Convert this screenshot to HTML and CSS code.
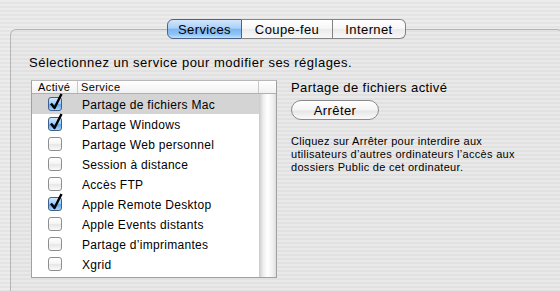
FILE: index.html
```html
<!DOCTYPE html>
<html lang="fr">
<head>
    <meta charset="UTF-8">
    <title>Partage</title>
    <link rel="stylesheet" href="styles.css">
</head>
<body>
    <div class="prefs">
        <!-- Onglets -->
        <nav class="tabs">
            <button class="tab active">Services</button>
            <button class="tab">Coupe-feu</button>
            <button class="tab">Internet</button>
        </nav>

        <section class="panel">
            <p class="intro">Sélectionnez un service pour modifier ses réglages.</p>

            <div class="panel-body">
                <!-- Liste des services -->
                <div class="services-table">
                    <div class="table-head">
                        <span class="col-on">Activé</span>
                        <span class="col-name">Service</span>
                        <span class="col-scroll"></span>
                    </div>
                    <div class="table-body">
                        <ul class="rows">
                            <li class="row selected"><span class="box on"><svg viewBox="0 0 16 18"><path d="M3 10.5 L6.5 15 L13.5 1"/></svg></span><span class="name">Partage de fichiers Mac</span></li>
                            <li class="row"><span class="box on"><svg viewBox="0 0 16 18"><path d="M3 10.5 L6.5 15 L13.5 1"/></svg></span><span class="name">Partage Windows</span></li>
                            <li class="row"><span class="box"></span><span class="name">Partage Web personnel</span></li>
                            <li class="row"><span class="box"></span><span class="name">Session à distance</span></li>
                            <li class="row"><span class="box"></span><span class="name">Accès FTP</span></li>
                            <li class="row"><span class="box on"><svg viewBox="0 0 16 18"><path d="M3 10.5 L6.5 15 L13.5 1"/></svg></span><span class="name">Apple Remote Desktop</span></li>
                            <li class="row"><span class="box"></span><span class="name">Apple Events distants</span></li>
                            <li class="row"><span class="box"></span><span class="name">Partage d’imprimantes</span></li>
                            <li class="row"><span class="box"></span><span class="name">Xgrid</span></li>
                        </ul>
                        <div class="scroll-track"></div>
                    </div>
                </div>

                <!-- Détails du service -->
                <div class="details">
                    <h2 class="status">Partage de fichiers activé</h2>
                    <button class="pill-button">Arrêter</button>
                    <p class="hint">Cliquez sur Arrêter pour interdire aux utilisateurs d’autres ordinateurs l’accès aux dossiers Public de cet ordinateur.</p>
                </div>
            </div>
        </section>
    </div>
</body>
</html>
```

FILE: styles.css
```css
* {
    margin: 0;
    padding: 0;
    box-sizing: border-box;
}

body {
    font-family: "Liberation Sans", Arial, sans-serif;
    color: #000;
    background: repeating-linear-gradient(to bottom, #ececec 0, #ececec 2px, #e4e4e4 2px, #e4e4e4 4px);
    height: 291px;
    overflow: hidden;
    padding-top: 19px;
}

.prefs {
    width: 553px;
    margin-left: 10px;
}

/* Onglets */
.tabs {
    display: flex;
    justify-content: center;
    position: relative;
    z-index: 1;
}

.tab {
    font-family: inherit;
    font-size: 13px;
    letter-spacing: 0.4px;
    height: 20px;
    padding: 0;
    border: 1px solid #838383;
    border-left: none;
    background: linear-gradient(to bottom, #ffffff 0%, #f6f6f6 50%, #ebebeb 52%, #f7f7f7 100%);
    color: #000;
}

.tab:nth-child(1) {
    width: 75px;
    border-left: 1px solid #5c6c86;
    border-radius: 6px 0 0 6px;
}

.tab:nth-child(2) {
    width: 91px;
}

.tab:nth-child(3) {
    width: 73px;
    border-radius: 0 6px 6px 0;
}

.tab.active {
    border-color: #4d6385;
    background: linear-gradient(to bottom, #d3e7fc 0%, #a9d0f7 45%, #7cb6f2 52%, #8fc4f6 80%, #c3e2fd 100%);
}

.panel {
    margin-top: -10px;
    height: 262px;
    border: 1px solid #b4b4b4;
    border-bottom: none;
    border-radius: 6px 6px 0 0;
    padding: 25px 0 0 18px;
    background: rgba(0, 0, 0, 0.01);
}

.intro {
    font-size: 13px;
    line-height: 16px;
    letter-spacing: 0.5px;
}

.panel-body {
    display: flex;
    margin-top: 9px;
    padding-left: 2px;
}

/* Tableau */
.services-table {
    width: 246px;
    border: 1px solid #a0a0a0;
    border-top-color: #b8b8b8;
    background: #fff;
}

.table-head {
    display: flex;
    height: 13px;
    border-bottom: 1px solid #b0b0b0;
    background: linear-gradient(to bottom, #ffffff, #f1f1f1);
    font-size: 11px;
    line-height: 12px;
    letter-spacing: 0.4px;
}

.table-head span {
    border-right: 1px solid #c8c8c8;
}

.col-on {
    width: 46px;
    padding-left: 6px;
}

.col-name {
    width: 181px;
    padding-left: 3px;
}

.col-scroll {
    width: 17px;
    border-right: none !important;
}

.table-body {
    display: flex;
    height: 183px;
}

.rows {
    list-style: none;
    width: 227px;
}

.row {
    display: flex;
    align-items: center;
    height: 20px;
    font-size: 12px;
    letter-spacing: 0.3px;
}

.row.selected {
    background: #d4d4d4;
}

.box {
    position: relative;
    width: 14px;
    height: 14px;
    margin: 0 20px 0 16px;
    border: 1px solid #8e8e8e;
    border-radius: 3px;
    background: linear-gradient(to bottom, #ffffff 0%, #f4f4f4 50%, #e6e6e6 55%, #fbfbfb 100%);
}

.box.on {
    border-color: #3f5f8f;
    background: linear-gradient(to bottom, #d5e9fd 0%, #9cc9f6 48%, #63a6ee 55%, #a9d6fb 100%);
}

.box svg {
    position: absolute;
    left: -1px;
    top: -5px;
    width: 16px;
    height: 18px;
    fill: none;
    stroke: #000;
    stroke-width: 2.4;
    stroke-linejoin: round;
}

.name {
    padding-top: 1px;
}

.scroll-track {
    width: 17px;
    background: linear-gradient(to right, #c9c9c9 0%, #eeeeee 25%, #ffffff 50%, #f1f1f1 80%, #dedede 100%);
}

/* Détails */
.details {
    margin-left: 14px;
}

.status {
    font-size: 13px;
    font-weight: normal;
    line-height: 16px;
    letter-spacing: 0.4px;
}

.pill-button {
    display: block;
    width: 88px;
    height: 20px;
    margin-top: 4px;
    font-family: inherit;
    font-size: 13px;
    letter-spacing: 0.4px;
    border: 1px solid #8a8a8a;
    border-radius: 10px;
    background: linear-gradient(to bottom, #ffffff 0%, #f4f4f4 50%, #e6e6e6 55%, #fafafa 100%);
    color: #000;
}

.hint {
    width: 240px;
    margin-top: 15px;
    font-size: 11px;
    line-height: 13px;
    letter-spacing: 0.3px;
}
```
